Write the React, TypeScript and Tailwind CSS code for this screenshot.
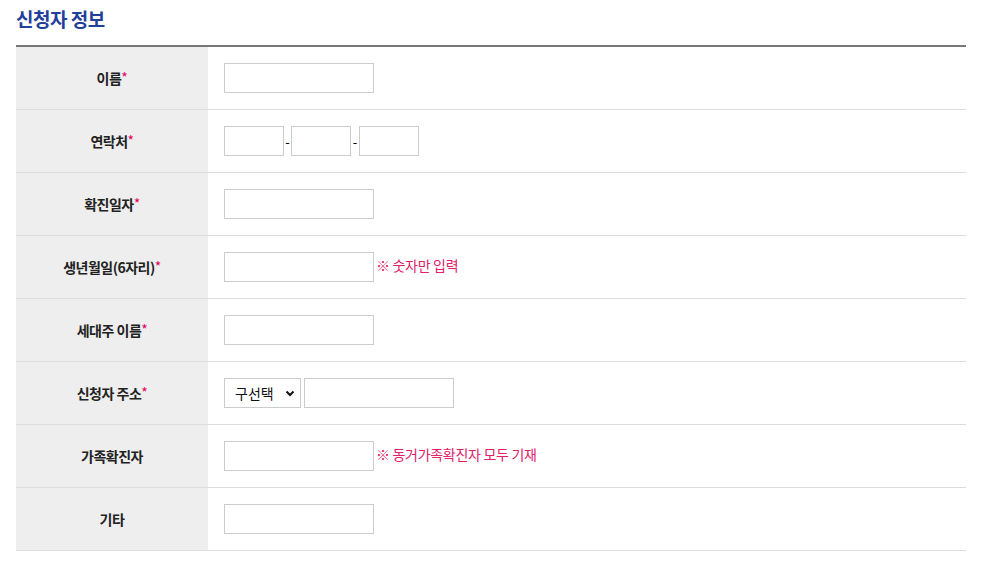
const rows: { label: string; req?: boolean; kind: string; note?: string }[] = [
  { label: "이름", req: true, kind: "text" },
  { label: "연락처", req: true, kind: "phone" },
  { label: "확진일자", req: true, kind: "text" },
  { label: "생년월일(6자리)", req: true, kind: "text", note: "※ 숫자만 입력" },
  { label: "세대주 이름", req: true, kind: "text" },
  { label: "신청자 주소", req: true, kind: "address" },
  { label: "가족확진자", kind: "text", note: "※ 동거가족확진자 모두 기재" },
  { label: "기타", kind: "text" },
];

const inputCls = "h-[30px] border border-[#ccc] bg-white outline-none";

function Field({ kind }: { kind: string }) {
  if (kind === "phone") {
    return (
      <div className="flex items-center">
        <input className={`${inputCls} w-[60px]`} />
        <span className="w-[7px] text-center text-[13px] leading-none">-</span>
        <input className={`${inputCls} w-[60px]`} />
        <span className="w-[8px] text-center text-[13px] leading-none">-</span>
        <input className={`${inputCls} w-[60px]`} />
      </div>
    );
  }
  if (kind === "address") {
    return (
      <div className="flex items-center gap-[3px]">
        <div className={`${inputCls} w-[77px] flex items-center justify-between pl-[10px] pr-[4px] text-[14px] text-[#111]`}>
          <span>구선택</span>
          <svg width="12" height="12" viewBox="0 0 12 12">
            <path d="M2.5 4.5 L6 8 L9.5 4.5" fill="none" stroke="#111" strokeWidth="2" />
          </svg>
        </div>
        <input className={`${inputCls} w-[150px]`} />
      </div>
    );
  }
  return <input className={`${inputCls} w-[150px]`} />;
}

export default function App() {
  return (
    <div
      className="bg-white w-[992px] min-h-[569px] px-4"
      style={{ fontFamily: '"Malgun Gothic", "Noto Sans CJK KR", "Noto Sans", sans-serif' }}
    >
      <h2 className="h-[45px] pt-[5px] text-[19px] font-bold leading-[28px] text-[#1f4099] tracking-[-0.5px]">
        신청자 정보
      </h2>
      <div className="w-[950px] border-t-2 border-[#777]">
        {rows.map((r) => (
          <div key={r.label} className="flex h-[63px] border-b border-[#ddd]">
            <div className="w-[192px] bg-[#eee] flex items-center justify-center text-[14px] font-bold text-[#222] tracking-[-0.5px]">
              {r.label}
              {r.req && <span className="text-[#e5005a] font-normal -mt-[2px]">*</span>}
            </div>
            <div className="flex-1 flex items-center pl-4">
              <Field kind={r.kind} />
              {r.note && (
                <span className="ml-[2px] -mt-[3px] text-[14px] text-[#e0206a] tracking-[-0.3px]">{r.note}</span>
              )}
            </div>
          </div>
        ))}
      </div>
    </div>
  );
}
